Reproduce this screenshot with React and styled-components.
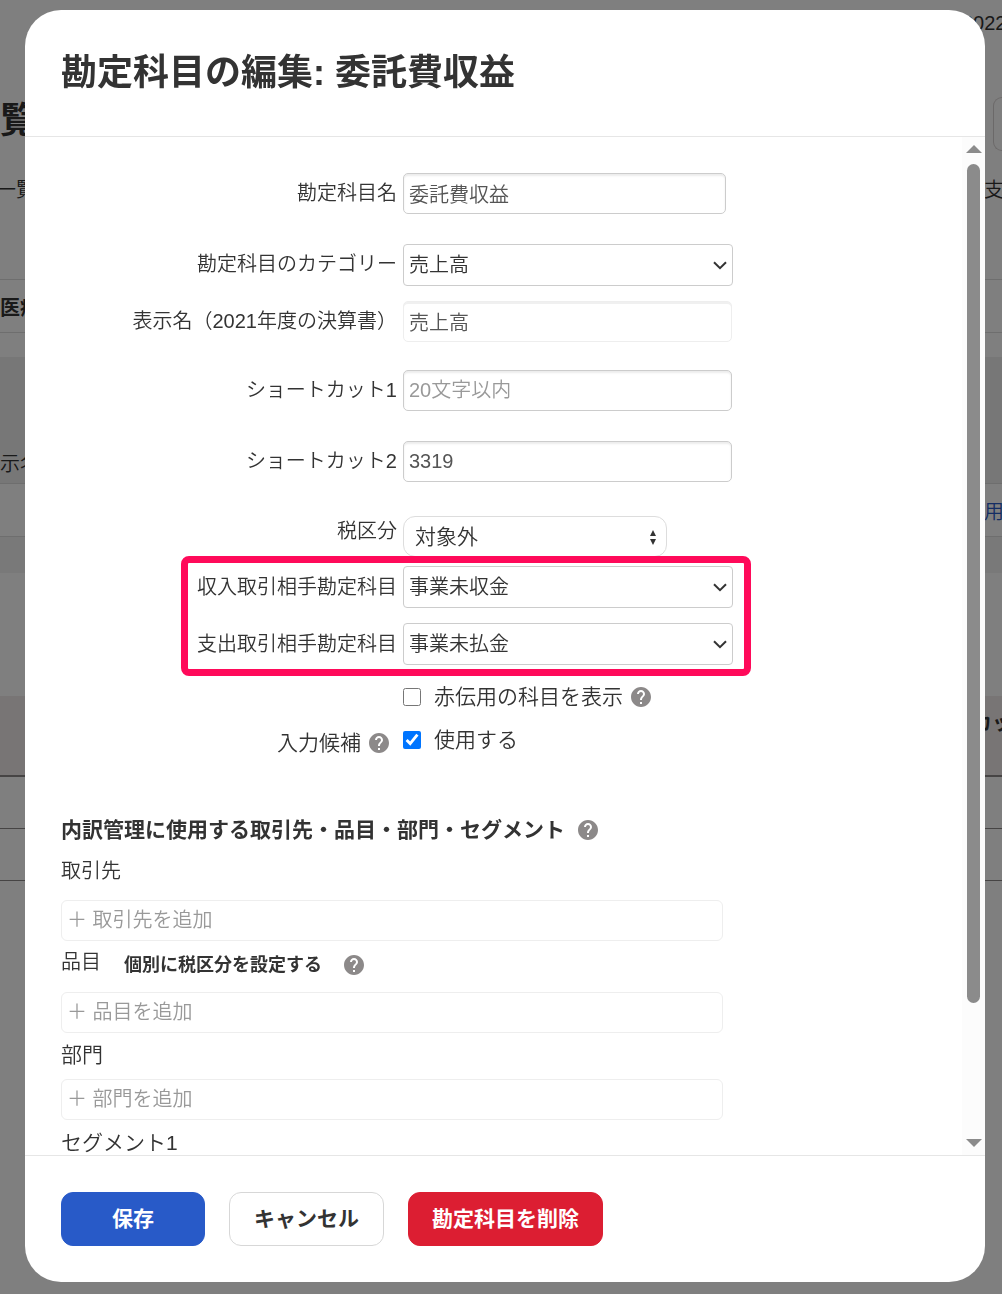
import React from "react";
import styled, { createGlobalStyle, css } from "styled-components";
import { MdHelp } from "react-icons/md";

const tagGroups = [
  { id: "items", label: "品目", placeholder: "＋ 品目を追加", before: 6, after: 15, action: "個別に税区分を設定する" },
  { id: "sections", label: "部門", placeholder: "＋ 部門を追加", before: 7, after: 9, large: true },
];

function SelectField({ id, value }) {
  return (
    <SelectWrapper>
      <Select id={id} defaultValue={value}>
        <option>{value}</option>
      </Select>
      <Chevron viewBox="0 0 14 9" aria-hidden="true">
        <path d="M1 1.2 L7 7.2 L13 1.2" fill="none" stroke="#333" strokeWidth="2" />
      </Chevron>
    </SelectWrapper>
  );
}

function Help() {
  return (
    <HelpButton type="button" aria-label="ヘルプ">
      <MdHelp size={24} />
    </HelpButton>
  );
}

function AccountList() {
  return (
    <ListPage aria-hidden="true">
      <ListRow $height={46}>
        <span />
        <ListEnd>2022</ListEnd>
      </ListRow>
      <ListRow $height={150}>
        <ListTitle>覧</ListTitle>
        <ListButton />
      </ListRow>
      <ListTabs>
        <span>一覧</span>
        <ListTabEnd>支</ListTabEnd>
      </ListTabs>
      <ListRow $height={53} $line $bold>医療</ListRow>
      <ListRow $height={25} $line />
      <ListRow $height={84} $tone="#eeeeee" />
      <ListRow $height={42} $tone="#eeeeee">示名</ListRow>
      <ListRow $height={53} $line>
        <span />
        <ListLink>用</ListLink>
      </ListRow>
      <ListRow $height={37} $line $tone="#f2f2f2" />
      <ListRow $height={123} />
      <ListRow $height={51} $tone="#f0eaea" $bold>
        <span />
        <ListHeadEnd>カッ</ListHeadEnd>
      </ListRow>
      <ListRow $height={28} $tone="#f0eaea" />
      <ListRow $height={53} $rule={2} />
      <ListRow $height={52} $rule={1} />
      <ListRow $height={52} $rule={1} />
    </ListPage>
  );
}

function App() {
  return (
    <>
      <GlobalStyle />
      <AccountList />
      <Overlay>
        <Modal role="dialog" aria-labelledby="modal-title">
          <ModalHeader>
            <ModalTitle id="modal-title">勘定科目の編集: 委託費収益</ModalTitle>
          </ModalHeader>

          <ModalBody>
            <Content>
              <Row $after={30}>
                <Label htmlFor="name">勘定科目名</Label>
                <Input id="name" defaultValue="委託費収益" $short />
              </Row>
              <Row $after={15}>
                <Label htmlFor="category">勘定科目のカテゴリー</Label>
                <SelectField id="category" value="売上高" />
              </Row>
              <Row $after={28}>
                <Label htmlFor="display">表示名（2021年度の決算書）</Label>
                <Input id="display" defaultValue="売上高" readOnly />
              </Row>
              <Row $after={30}>
                <Label htmlFor="shortcut1">ショートカット1</Label>
                <Input id="shortcut1" placeholder="20文字以内" />
              </Row>
              <Row $after={34}>
                <Label htmlFor="shortcut2">ショートカット2</Label>
                <Input id="shortcut2" defaultValue="3319" />
              </Row>
              <Row $after={9}>
                <Label htmlFor="tax" $compact>税区分</Label>
                <TaxWrapper>
                  <TaxSelect id="tax" defaultValue="対象外">
                    <option>対象外</option>
                  </TaxSelect>
                  <Updown viewBox="0 0 6 15" aria-hidden="true">
                    <path d="M3 0 L6 6 H0 Z M3 15 L6 9 H0 Z" fill="#333" />
                  </Updown>
                </TaxWrapper>
              </Row>

              <HighlightGroup>
                <Row $after={15}>
                  <Label htmlFor="income">収入取引相手勘定科目</Label>
                  <SelectField id="income" value="事業未収金" />
                </Row>
                <Row $after={11}>
                  <Label htmlFor="expense">支出取引相手勘定科目</Label>
                  <SelectField id="expense" value="事業未払金" />
                </Row>
                <Highlight />
              </HighlightGroup>

              <Row $after={1}>
                <span />
                <CheckLine>
                  <CheckLabel>
                    <Checkbox type="checkbox" />
                    赤伝用の科目を表示
                  </CheckLabel>
                  <Help />
                </CheckLine>
              </Row>
              <Row $after={54}>
                <SuggestLabel>
                  <label htmlFor="suggest">入力候補</label>
                  <Help />
                </SuggestLabel>
                <CheckLine>
                  <CheckLabel>
                    <Checkbox id="suggest" type="checkbox" defaultChecked />
                    使用する
                  </CheckLabel>
                </CheckLine>
              </Row>

              <SectionTitle>
                内訳管理に使用する取引先・品目・部門・セグメント
                <Help />
              </SectionTitle>

              <TagHead $before={11} $after={14}>
                <TagLabel htmlFor="partners">取引先</TagLabel>
              </TagHead>
              <TagInput id="partners" placeholder="＋ 取引先を追加" />

              {tagGroups.map((group) => (
                <React.Fragment key={group.id}>
                  <TagHead $before={group.before} $after={group.after}>
                    <TagLabel htmlFor={group.id} $large={group.large}>{group.label}</TagLabel>
                    {group.action && (
                      <TagAction>
                        <TagActionButton type="button">{group.action}</TagActionButton>
                        <Help />
                      </TagAction>
                    )}
                  </TagHead>
                  <TagInput id={group.id} placeholder={group.placeholder} />
                </React.Fragment>
              ))}

              <TagHead $before={8} $after={15}>
                <TagLabel htmlFor="segment1" $large>セグメント1</TagLabel>
              </TagHead>
              <TagInput id="segment1" />
            </Content>

            <Scrollbar aria-hidden="true">
              <ScrollArrow viewBox="0 0 16 8">
                <path d="M8 0 L16 8 H0 Z" fill="#8b8b8b" />
              </ScrollArrow>
              <ScrollTrack>
                <ScrollThumb />
              </ScrollTrack>
              <ScrollArrow viewBox="0 0 16 8">
                <path d="M0 0 H16 L8 8 Z" fill="#8b8b8b" />
              </ScrollArrow>
            </Scrollbar>
          </ModalBody>

          <ModalFooter>
            <Button type="button" $variant="primary">保存</Button>
            <Button type="button">キャンセル</Button>
            <Button type="button" $variant="danger">勘定科目を削除</Button>
          </ModalFooter>
        </Modal>
      </Overlay>
    </>
  );
}

export default App;

const GlobalStyle = createGlobalStyle`
  * {
    box-sizing: border-box;
  }

  body {
    margin: 0;
    color: #333;
    background: #fff;
    font-size: 20px;
    font-weight: 350;
    font-family: "Liberation Sans", "Noto Sans CJK JP", sans-serif;
  }

  button, input, select {
    margin: 0;
    font: inherit;
    color: inherit;
  }
`;

/* list page behind the dialog */

const ListPage = styled.div`
  height: 100vh;
  overflow: hidden;
  white-space: nowrap;
`;

const ListRow = styled.div`
  display: flex;
  align-items: center;
  justify-content: space-between;
  height: ${(props) => props.$height}px;
  background: ${(props) => props.$tone || "transparent"};
  font-weight: ${(props) => (props.$bold ? 700 : 350)};
  ${(props) => props.$line && css`border-top: 1px solid #dcdcdc;`}
  ${(props) => props.$rule && css`border-top: ${props.$rule}px solid #8c8989;`}
`;

const ListTabs = styled(ListRow)`
  align-items: flex-start;
  height: 103px;
  margin-top: -20px;
  margin-left: -4px;
  line-height: 28px;
`;

const ListTitle = styled.span`
  font-size: 36px;
  font-weight: 700;
  line-height: 50px;
`;

const ListEnd = styled.span`
  flex: 0 0 40px;
  min-width: 0;
`;

const ListTabEnd = styled(ListEnd)`
  flex-basis: 18px;
`;

const ListHeadEnd = styled(ListEnd)`
  flex-basis: 30px;
`;

const ListLink = styled(ListEnd)`
  flex-basis: 18px;
  color: #285ac8;
`;

const ListButton = styled.span`
  flex: 0 0 9px;
  height: 54px;
  margin-top: 6px;
  border: 1px solid #d7d2d2;
  border-right: 0;
  border-radius: 12px 0 0 12px;
`;

/* dialog */

const Overlay = styled.div`
  position: fixed;
  inset: 0;
  display: flex;
  padding: 10px 17px 12px 25px;
  background: rgba(0, 0, 0, 0.5);
`;

const Modal = styled.section`
  flex: 1;
  min-width: 0;
  display: flex;
  flex-direction: column;
  overflow: hidden;
  border-radius: 36px;
  background: #fff;
`;

const ModalHeader = styled.header`
  padding: 36px;
  border-bottom: 1px solid #e6e6e6;
`;

const ModalTitle = styled.h1`
  margin: 0;
  font-size: 36px;
  font-weight: 700;
  line-height: 54px;
`;

const ModalBody = styled.div`
  flex: 1;
  min-height: 0;
  display: flex;
`;

const Content = styled.div`
  flex: 1;
  min-width: 0;
  padding: 36px 36px 0;
  overflow: hidden;
`;

const ModalFooter = styled.footer`
  display: flex;
  gap: 24px;
  padding: 36px;
  border-top: 1px solid #e6e6e6;
`;

/* form rows */

const Row = styled.div`
  display: grid;
  grid-template-columns: minmax(160px, 336px) minmax(0, 330px);
  column-gap: 6px;
  margin-bottom: ${(props) => props.$after}px;
`;

const Label = styled.label`
  text-align: right;
  white-space: nowrap;
  line-height: ${(props) => (props.$compact ? 30 : 40)}px;
`;

const Input = styled.input`
  width: 100%;
  max-width: ${(props) => (props.$short ? 323 : 329)}px;
  height: 41px;
  padding: 0 5px;
  border: 1px solid #ccc;
  border-radius: 5px;
  outline: 0;
  background: #fff;
  box-shadow: inset 0 2px 2px rgba(0, 0, 0, 0.08);
  color: #555;

  &::placeholder {
    color: #999;
    opacity: 1;
  }

  &:read-only {
    border-color: #eee;
    box-shadow: inset 0 2px 0 #f0f0f0;
  }
`;

const SelectWrapper = styled.div`
  position: relative;
`;

const Select = styled.select`
  display: block;
  width: 100%;
  height: 42px;
  padding: 0 30px 0 5px;
  border: 1px solid #ccc;
  border-radius: 4px;
  background: #fff;
  appearance: none;
`;

const Chevron = styled.svg`
  position: absolute;
  top: 17px;
  right: 6px;
  width: 14px;
  height: 9px;
  pointer-events: none;
`;

const TaxWrapper = styled(SelectWrapper)`
  max-width: 264px;
`;

const TaxSelect = styled(Select)`
  height: 41px;
  padding: 0 30px 0 11px;
  border-color: #ddd;
  border-radius: 12px;
  font-size: 21px;
`;

const Updown = styled.svg`
  position: absolute;
  top: 14px;
  right: 11px;
  width: 6px;
  height: 15px;
  pointer-events: none;
`;

const HighlightGroup = styled.div`
  position: relative;
  max-width: 672px;

  ${Label} {
    line-height: 42px;
  }
`;

const Highlight = styled.div`
  position: absolute;
  top: -10px;
  right: -18px;
  bottom: -11px;
  left: 120px;
  border: 7px solid #ff0a5a;
  border-radius: 8px;
  pointer-events: none;
`;

const CheckLine = styled.div`
  display: flex;
  align-items: center;
  gap: 6px;
  height: 42px;
`;

const CheckLabel = styled.label`
  display: flex;
  align-items: center;
  gap: 13px;
  font-size: 21px;
  line-height: 28px;
`;

const Checkbox = styled.input`
  width: 18px;
  height: 18px;
`;

const HelpButton = styled.button`
  display: flex;
  padding: 0;
  border: 0;
  background: none;
  color: #8c8989;
  cursor: pointer;
`;

const SuggestLabel = styled.div`
  display: flex;
  align-items: center;
  justify-content: flex-end;
  gap: 6px;
  padding: 6px 6px 0 0;
  font-size: 21px;
  line-height: 28px;
`;

/* tag section */

const SectionTitle = styled.h2`
  display: flex;
  align-items: center;
  gap: 11px;
  margin: 0;
  font-size: 21px;
  font-weight: 700;
  line-height: 30px;
`;

const TagHead = styled.div`
  display: flex;
  gap: 23px;
  height: 30px;
  margin: ${(props) => props.$before}px 0 ${(props) => props.$after}px;
  line-height: 30px;
`;

const TagLabel = styled.label`
  font-size: ${(props) => (props.$large ? 21 : 20)}px;
`;

const TagAction = styled.div`
  display: flex;
  align-items: center;
  gap: 20px;
  padding-top: 6px;
`;

const TagActionButton = styled.button`
  padding: 0;
  border: 0;
  background: none;
  font-size: 18px;
  font-weight: 700;
  cursor: pointer;
`;

const TagInput = styled(Input)`
  display: block;
  max-width: 662px;
  border-color: #eee;
  border-radius: 6px;
  box-shadow: none;
`;

/* scrollbar */

const Scrollbar = styled.div`
  flex: 0 0 23px;
  display: flex;
  flex-direction: column;
  align-items: center;
  gap: 11px;
  padding: 8px 0;
  background: #fcfcfc;
`;

const ScrollArrow = styled.svg`
  width: 16px;
  height: 8px;
`;

const ScrollTrack = styled.div`
  flex: 1;
  width: 13px;
`;

const ScrollThumb = styled.div`
  height: 87%;
  border-radius: 7px;
  background: #8b8b8b;
`;

/* buttons */

const variants = {
  primary: css`
    border-color: #285ac8;
    background: #285ac8;
    color: #fff;
  `,
  danger: css`
    border-color: #dc1e32;
    background: #dc1e32;
    color: #fff;
  `,
};

const Button = styled.button`
  min-width: 144px;
  height: 54px;
  padding: 0 23px 4px;
  border: 1px solid #d7d7d7;
  border-radius: 12px;
  background: #fff;
  font-size: 21px;
  font-weight: 700;
  white-space: nowrap;
  cursor: pointer;
  ${(props) => variants[props.$variant] || css`padding: 0 24px 4px;`}
`;
